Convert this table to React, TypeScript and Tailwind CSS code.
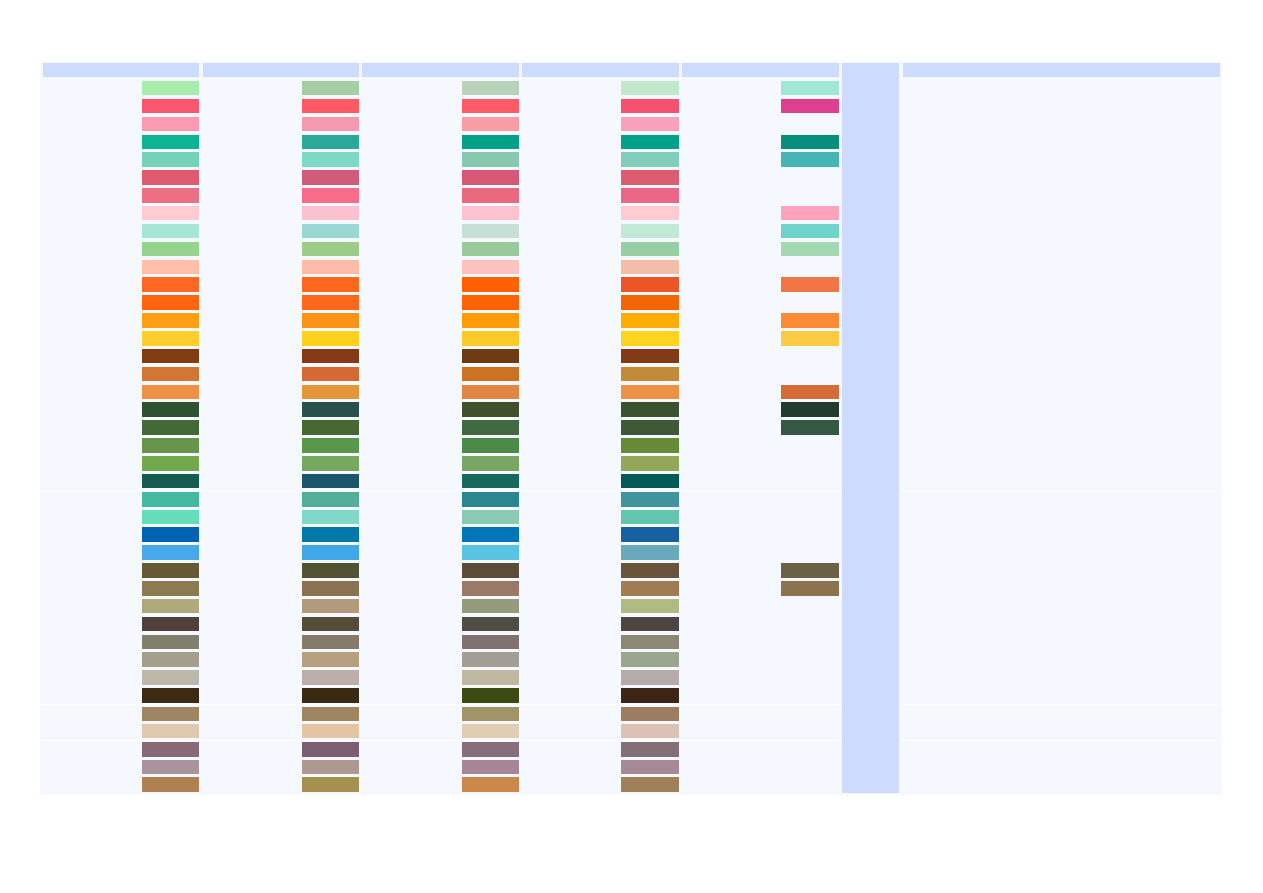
type SwatchColumn = {
  width: string;
  headerMargin: string;
  swatchWidth: string;
  colors: (string | null)[];
};

const columns: SwatchColumn[] = [
  {
    width: "w-[161px]",
    headerMargin: "ml-[3px] mr-[2px]",
    swatchWidth: "w-[57px]",
    colors: [
      "#a8ecad", "#f9566f", "#fb9ab0", "#0db494", "#74d2b8", "#e05a6e", "#ec6f82", "#fecbd3",
      "#a5e6d5", "#96d48d", "#ffbfa8", "#fe6822", "#ff650f", "#fd9e15", "#fece2c", "#813e12",
      "#d17733", "#ee9045", "#2e5131", "#436938", "#67944b", "#72a84e", "#135c4f", "#44b8a0",
      "#63ddba", "#0062b3", "#47a8eb", "#655a35", "#8a7b50", "#afaa7b", "#4f403a", "#807f6e",
      "#a59e8a", "#beb8ab", "#3c2a12", "#9e8664", "#dec8ae", "#876a76", "#a8949a", "#b08050",
    ],
  },
  {
    width: "w-[160px]",
    headerMargin: "ml-[2px] mr-[2px]",
    swatchWidth: "w-[57px]",
    colors: [
      "#a3cfa3", "#fe5a66", "#f49ab0", "#2aa99a", "#7fd7c5", "#d05c78", "#f86c89", "#fcc1cf",
      "#9ad8d3", "#9dcb88", "#fcbaa8", "#fe681c", "#fe681c", "#fb9317", "#fed11f", "#853a18",
      "#d66833", "#e29839", "#27514a", "#476732", "#5a954c", "#76a85f", "#1c566c", "#53ad98",
      "#81d8c8", "#0078aa", "#40a8e9", "#525333", "#8a7152", "#b29b7d", "#554c3a", "#857b6b",
      "#b69e80", "#bdaea9", "#3a2a14", "#a08660", "#e6c3a3", "#7c5e73", "#ae9890", "#a59050",
    ],
  },
  {
    width: "w-[160px]",
    headerMargin: "ml-[1px] mr-[2px]",
    swatchWidth: "w-[57px]",
    colors: [
      "#b8d3b9", "#ff5a68", "#f89da3", "#00a186", "#89c8b0", "#d75876", "#ea697c", "#fec2cf",
      "#c7dfd7", "#98ca9c", "#fdc1bf", "#ff6002", "#ff6300", "#fd9c06", "#fbca28", "#6c3b13",
      "#cc7322", "#e18644", "#414f2a", "#426a40", "#4b8a48", "#7aa663", "#17695e", "#2a8790",
      "#8ac9b2", "#0076b8", "#59c3e3", "#5c4b37", "#9c7964", "#949b7d", "#4e4e44", "#817272",
      "#a39d94", "#beb9a0", "#3b4a12", "#a09468", "#e0ceb3", "#876e7d", "#a88596", "#cc884a",
    ],
  },
  {
    width: "w-[160px]",
    headerMargin: "ml-[1px] mr-[2px]",
    swatchWidth: "w-[58px]",
    colors: [
      "#bfe9ca", "#f55270", "#f9a1ba", "#00a18a", "#81cdb9", "#dd5c72", "#eb6787", "#fecbd2",
      "#c0e9d6", "#98cea4", "#f4bcaa", "#ed5426", "#f36500", "#ffac04", "#fed41e", "#833a16",
      "#c38b38", "#ed9145", "#3c522f", "#3f5836", "#658b37", "#93a75a", "#005a55", "#3f949d",
      "#62c5b0", "#1761a2", "#6aa8be", "#6a553c", "#9f7c54", "#b0bb84", "#4c4542", "#8b8876",
      "#9ba68e", "#b5abab", "#3c2516", "#9e7c62", "#dcc2b4", "#846f76", "#a78895", "#a08058",
    ],
  },
  {
    width: "w-[160px]",
    headerMargin: "ml-[1px] mr-[2px]",
    swatchWidth: "w-[58px]",
    colors: [
      "#a0e7d5", "#de408f", null, "#068e7e", "#45b5b5", null, null, "#fea3ba",
      "#6dd3cb", "#a4d8b1", null, "#f27546", null, "#fa8a36", "#facb42", null,
      null, "#d56b36", "#223b2e", "#335945", null, null, null, null,
      null, null, null, "#6c6047", "#8b734e", null, null, null,
      null, null, null, null, null, null, null, null,
    ],
  },
];

// rows that get a thin white rule on top
const ruledRows = [23, 35, 37];

function Row({ color, index, swatchWidth }: { color: string | null; index: number; swatchWidth: string }) {
  const ruled = ruledRows.includes(index);
  return (
    <div
      className={
        "flex h-[17.87px] items-center justify-end pr-[2px]" + (ruled ? " border-t border-white" : "")
      }
    >
      {color ? <div className={"h-[14.5px] " + swatchWidth} style={{ backgroundColor: color }} /> : null}
    </div>
  );
}

function HeaderCell({ margin }: { margin: string }) {
  return <div className={"mt-[1px] mb-[2.3px] h-[14px] bg-[#cddbfd] " + margin}></div>;
}

export default function App() {
  const emptyRows = Array.from({ length: 40 }, (_, i) => i);
  return (
    <div className="min-h-screen bg-white pt-[62px] pl-[40px] font-['Liberation_Sans',sans-serif]">
      <div className="flex w-[1182px] bg-[#f5f9ff] pb-[1px]">
        {columns.map((col, ci) => (
          <div key={ci} className={"flex flex-col " + col.width}>
            <HeaderCell margin={col.headerMargin} />
            {col.colors.map((c, ri) => (
              <Row key={ri} color={c} index={ri} swatchWidth={col.swatchWidth} />
            ))}
          </div>
        ))}

        {/* highlighted column */}
        <div className="flex w-[60px] flex-col pt-[1px] pb-[1px] pl-[1px] pr-[2px]">
          <div className="flex-1 bg-[#cddbfd]"></div>
        </div>

        <div className="flex w-[321px] flex-col">
          <HeaderCell margin="ml-[2px] mr-[2px]" />
          {emptyRows.map((ri) => (
            <Row key={ri} color={null} index={ri} swatchWidth="w-[57px]" />
          ))}
        </div>
      </div>
    </div>
  );
}
